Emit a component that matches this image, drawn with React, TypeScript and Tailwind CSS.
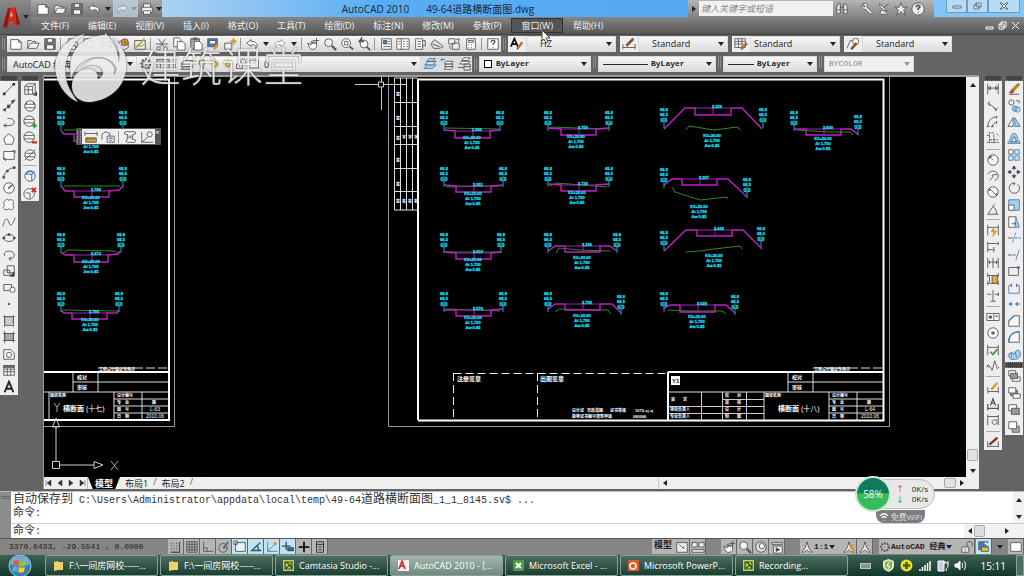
import type { ReactNode } from "react";

const blue = "#3f7fb5";
const pale = "#a9d0ee";
const gold = "#d79a2b";

// Toolbar glyphs, all drawn on a 16 x 16 grid
const glyphs: Record<string, ReactNode> = {
  new: <path d="M2 3h9l3 3v8H2zM11 3v3h3" fill="#fff" />,
  open: <path d="M2 13V4h4l1 1h4v2M2 13l3-6h10l-3 6z" fill="#f4f4f4" />,
  save: <><path d="M2 2h12v12H2z" fill="#777" /><path d="M5 2h6v4H5zM4 9h8v5H4z" fill="#fff" /></>,
  undo: <path d="M7 3L2 7l5 4V9c4-1 6 1 5 4 4-4 1-8-5-8z" fill="#fff" />,
  redo: <path d="M9 3l5 4-5 4V9c-4-1-6 1-5 4-4-4-1-8 5-8z" fill="#fff" stroke="#999" />,
  print: <><path d="M4 6V2h8v4M2 6h12v6H2z" fill="#eee" /><path d="M4 10h8v4H4z" fill="#fff" /></>,
  preview: <><path d="M2 2h9v3M2 2v11h5" /><circle cx="9" cy="8" r="3.500" fill="#fff" /><path d="M11.500 10.500L15 14" strokeWidth="2" /></>,
  publish: <><path d="M3 6l5-3 6 3v6l-5 3-6-3z" fill="#dfe8ef" /><circle cx="10" cy="6" r="4" fill={gold} /><path d="M10 4v3h2" /></>,
  dwf: <><path d="M2 4h12v10H2z" fill="#e9efe4" /><path d="M4 12l9-10" stroke={gold} strokeWidth="2" /><path d="M3 11l3-2 3 2 4-3" stroke="#6a8f4e" /></>,
  cut: <><path d="M4 2l6 9M12 2L6 11M1 8h14" /><circle cx="4" cy="13" r="2" /><circle cx="12" cy="13" r="2" /></>,
  copy: <><path d="M2 1h6l2 2v8H2z" fill="#fff" /><path d="M6 5h6l3 3v7H6z" fill="#fff" /></>,
  paste: <><path d="M2 2h10v12H2z" fill="#aaa" /><path d="M5 1h4v2H5z" /><path d="M6 5h6l3 3v7H6z" fill="#fff" /></>,
  match: <><path d="M2 2h11v9H2z" fill="#4f7fc0" /><path d="M4 4h7v4H4z" fill="#fff" /><path d="M9 14l5-6" stroke={gold} strokeWidth="3" /></>,
  block: <><path d="M2 7h8v7H2z" fill="#eee" /><path d="M12 1l1 3 3 1-3 1-1 3-1-3-3-1 3-1z" fill={gold} stroke={gold} /></>,
  pan: <><path d="M2 7l4 2V5l2 3V4l2 4 2-3v6c-1 4-7 4-8 1z" fill="#fff" /><path d="M12 1v6M9 4h6" /></>,
  zoom: <><circle cx="6.500" cy="6.500" r="4.500" fill="#e8f2f8" /><path d="M10 10l5 5" strokeWidth="2.500" /></>,
  zoomWin: <><circle cx="7" cy="7" r="5" fill="#fff" /><path d="M5 5h4v4H5z" /><path d="M11 11l4 3" strokeWidth="2" /></>,
  zoomPrev: <><circle cx="8" cy="8" r="4.500" fill="#fff" /><path d="M2 6l3-4v3h3M11 11l4 4" strokeWidth="2" /></>,
  props: <><path d="M3 2h11v12H3z" fill="#fff" /><path d="M5 4h4v4H5z" fill={blue} /><path d="M10 5h3M10 8h3M5 11h8" /></>,
  center: <><path d="M1 2h14v12H1z" fill="#fff" /><path d="M6 2v12M8 5h2M12 5h2M8 8h2M12 8h2M8 11h2M12 11h2M3 5h2M3 8h2" /></>,
  palette: <><path d="M3 2h8v12H3z" fill="#fff" /><path d="M11 4h3v6h-3M5 5h4M5 8h4M5 11h4" /></>,
  sheet: <path d="M1 8l4-5 6 4 4 4-4 2H4zM3 8l8 3" fill="#ddd" />,
  markup: <><path d="M2 2h7v6H2zM6 7h8v7H6z" fill="#eee" /><path d="M10 3l4-1-1 4M3 10l1 4" /></>,
  calc: <><path d="M3 2h10v12H3z" fill="#fff" /><path d="M5 4h6v2H5zM5 9h1M8 9h1M11 9h0M5 12h1M8 12h1" /></>,
  help: <><path d="M2 2h12v12H2z" fill="#fff" /><path d="M6 6c0-3 5-3 4 0-1 1-2 1-2 3M8 11v1" strokeWidth="1.500" /></>,
  textStyle: <><path d="M1 11L5 2l4 9M3 8h4" stroke="#111" strokeWidth="2" /><path d="M8 14l6-8" stroke="#a9702f" strokeWidth="2.500" /></>,
  dimStyle: <><path d="M1 8v6M15 8v6M1 12h14" /><path d="M5 10l8-8" stroke="#8b5327" strokeWidth="3" /></>,
  tableStyle: <><path d="M1 2h12v10H1zM1 5h12M5 2v10M9 2v10M1 8h12" fill="#fff" /><path d="M8 14l7-7" stroke="#a9702f" strokeWidth="3" /></>,
  leaderStyle: <><path d="M1 13l4-9h4" /><circle cx="11" cy="5" r="3.500" fill="#fff" /><path d="M6 14l6-7" stroke="#8b5327" strokeWidth="3" /></>,
  gear: <><circle cx="8" cy="8" r="5.500" strokeDasharray="2.500 1.500" strokeWidth="2" /><circle cx="8" cy="8" r="4" fill="#eee" /><circle cx="8" cy="8" r="1.500" /></>,
  workspace: <><path d="M1 3h14v10H1z" fill="#ddd" /><path d="M1 6h14M5 6v7" /></>,
  layers: <><path d="M1 11l4-4h10l-4 4zM1 8l4-4h10l-4 4z" fill="#fff" /><path d="M1 14l4-3h10l-4 3z" fill={pale} /></>,
  layersBlue: <><path d="M1 13l4-4h10l-4 4z" fill={pale} stroke={blue} /><path d="M2 9l4-4h9l-4 4zM4 5l3-3h7l-3 3z" fill="#cfe4f2" stroke="#35688f" /></>,
  layerPrev: <><path d="M5 14l2-3h8l-2 3zM5 11l2-3h8l-2 3zM5 8l2-3h8l-2 3z" fill="#fff" /><path d="M1 3h5M1 3l2-2M1 3l2 2" stroke={blue} /></>,
  layerState: <><path d="M3 8l3-3h9l-3 3zM5 4l3-3h7l-3 3z" fill="#fff" /><path d="M8 8h7v7H8zM1 12h7M8 11h7" /></>,
  bulb: <><circle cx="8" cy="6" r="4" fill="#f4d35c" /><path d="M6 11h4v3H6z" fill="#ddd" /></>,
  sun: <><circle cx="8" cy="8" r="3.500" fill="#f4c33c" /><path d="M8 1v2M8 13v2M1 8h2M13 8h2M3 3l1 1M12 12l1 1M13 3l-1 1M4 12l-1 1" stroke={gold} /></>,
  lock: <><path d="M2 8h8v6H2z" fill="#e6e6e6" /><path d="M8 8V4c0-3 6-3 6 0v3M6 10v2" /></>,
  line: <><path d="M3 13L13 3" /><path d="M1 12h3v3H1zM12 1h3v3h-3z" fill="#333" stroke="none" /></>,
  xline: <><path d="M2 14L14 2" /><path d="M6 7h3v3H6zM1 12l3-1v3zM12 5l3-4-4 1z" fill="#333" /></>,
  pline: <path d="M2 12h7c7 0 6-8 0-8H6M2 12l3-2M2 12l3 2" />,
  polygon: <path d="M8 2l6 5-2 7H4L2 7z" fill="#f7f7f7" />,
  rect: <path d="M2 4h12v9H2zM1 12h3v3M12 3h3v3" fill="#f7f7f7" />,
  arc: <><path d="M2 14C3 8 7 4 14 3" /><path d="M1 13h2v2H1zM5 6h2v2H5zM13 2h2v2h-2z" fill="#333" /></>,
  circle: <><circle cx="8" cy="8" r="6" fill="#f7f7f7" /><path d="M8 8l4-4M7 8h2" strokeWidth="1.500" /></>,
  cloud: <path d="M5 2c2-1 3 0 3 1 1-2 5-1 5 1s0 3-1 4c2 1 2 4 0 5s-3 0-4-1c-1 2-5 2-6 0s0-3 1-4C1 7 2 3 5 2z" fill="#f7f7f7" />,
  spline: <path d="M1 13C4 0 7 5 8 9s4 4 7-6" />,
  ellipse: <><ellipse cx="8" cy="8" rx="6" ry="4" /><path d="M1 7h2v2H1zM13 7h2v2h-2zM7 3h2v2H7z" fill="#333" /></>,
  ellArc: <path d="M3 9c-3-7 11-7 11-1 0 4-4 5-6 4M8 12l3-2M8 12l2 3" />,
  insert: <><path d="M6 2h8v8H6zM2 7h7v6H2z" fill="#eee" /><path d="M9 14l5-5v5z" fill="#333" /></>,
  makeBlock: <><path d="M2 4h9v7H2z" fill="#eee" /><circle cx="12" cy="10" r="3" fill="#fff" /></>,
  point: <circle cx="8" cy="8" r="1" fill="#333" />,
  hatch: <><path d="M3 3h10v10H3z" /><path d="M3 6l3-3M3 9l6-6M3 12l9-9M5 13l8-8M8 13l5-5M1 3h14M3 1v14M13 1v14" strokeWidth=".7" /></>,
  gradient: <><path d="M3 4h10v8H3z" fill="#aaa" /><path d="M1 4h14M3 1v14M13 2v12M1 12h14" /></>,
  region: <><path d="M2 3h8l4 4v7H2z" fill="#f7f7f7" /><circle cx="8" cy="9" r="3" /></>,
  table: <><path d="M2 3h12v11H2zM2 7h12M2 10h12M6 5v9M10 5v9" fill="#fff" /><path d="M2 3h12v2H2z" fill="#777" /></>,
  letterA: <path d="M3 14L8 2l5 12M5 10h6" stroke="#222" strokeWidth="2.200" />,
  cube: <><path d="M2 5l3-3h9v9l-3 3H2zM2 5h9v9M11 5l3-3M6 5v9M2 9h9" fill="#f7f7f7" /><path d="M12 15l4-4v4z" fill="#111" /></>,
  globe: <><circle cx="8" cy="8" r="6" fill="#f7f7f7" /><path d="M2 6h12M2 10h12M4 3v3M12 3v3" /></>,
  globeAdd: <><circle cx="7" cy="7" r="6" fill="#f7f7f7" /><path d="M1 5h12M1 9h12" /><path d="M13 9v6M10 12h6" stroke="#2d9a3e" strokeWidth="2" /></>,
  globeDel: <><circle cx="7" cy="7" r="6" fill="#f7f7f7" /><path d="M1 5h12M1 9h12" /><path d="M10 13h6" stroke="#c92b2b" strokeWidth="2.500" /></>,
  globeOff: <><circle cx="8" cy="8" r="6" fill="#f7f7f7" /><path d="M2 14L14 2M3 6h10M3 10h10" /></>,
  cubeBlue: <><circle cx="8" cy="8" r="6" fill="#f7f7f7" /><path d="M3 6h7v7M10 6l3-3M3 6l3-3h6" stroke={blue} strokeWidth="1.300" /></>,
  cubeDel: <><circle cx="7" cy="9" r="6" fill="#f7f7f7" /><path d="M3 8h5v6" /><path d="M10 2l5 5M15 2l-5 5" stroke="#d02222" strokeWidth="2" /></>,
  dimLinear: <path d="M2 2v12M14 2v12M2 7h12M2 7l3-2v4zM14 7l-3-2v4z" />,
  dimAlign: <path d="M4 3L2 6M13 10l-2 4M3 5l9 7M3 5l1 3M12 12l-3-1" />,
  dimArc: <path d="M2 14C2 7 6 2 13 2M7 14c0-3 3-6 6-6M1 13h3M12 1v3M6 13h3M12 7v3" />,
  dimOrd: <path d="M4 1v13M1 5h3M4 10h10M9 4v10M12 3l3 3M6 2h3M1 13h14" strokeDasharray="3 1" />,
  radius: <><circle cx="8" cy="8" r="6" fill="#f7f7f7" /><path d="M8 8L4 4M4 4v3M4 4h3" /></>,
  jogged: <path d="M2 6c3-6 12-4 12 2 0 3-2 4-4 5M4 13l4-4-1-2 6-1" />,
  diameter: <><circle cx="8" cy="8" r="6" fill="#f7f7f7" /><path d="M4 4l8 8M4 4v3M12 12V9" /></>,
  angular: <path d="M14 14H2L10 2M8 5c3 2 4 5 4 9" />,
  quick: <><path d="M2 2v12M14 2v12M2 5h12" /><path d="M9 5l-3 5h3l-1 5 4-6H9z" fill={gold} stroke={gold} /></>,
  baseline: <path d="M2 2v12M14 2v4M2 4h12M9 8v6M2 11h7" />,
  cont: <path d="M2 2v12M8 2v12M14 2v12M2 7h12M4 5v4M12 5v4" />,
  space: <><path d="M2 1v5M14 1v5M2 10v5M14 10v5M2 4h12M2 13h12" /><path d="M7 4h6v9H7z" fill="#e0b23a" /><path d="M4 5v7" /></>,
  brk: <path d="M8 1v13M1 6h5M10 6h5M5 14h6M14 4v4" />,
  tolerance: <><path d="M1 4h14v8H1zM9 4v8" fill="#fff" /><path d="M3 8h4M5 6v4M12 6v2M12 10v0" strokeWidth="2" /></>,
  centerMark: <><circle cx="8" cy="8" r="6" fill="#f7f7f7" /><path d="M8 6v4M6 8h4" strokeWidth="1.500" /></>,
  inspect: <><path d="M2 2v12M14 2v12M2 5h12" /><path d="M5 10l3 3 5-6" stroke="#4a9a2d" strokeWidth="2" /></>,
  jogLine: <path d="M1 8h3l3 5 3-11 3 9 2-2M1 8l2-2M1 8l2 2" />,
  dimEdit: <><path d="M2 7v7M14 7v7M2 12h12" /><path d="M6 10l7-8" stroke={gold} strokeWidth="2.500" /></>,
  dimText: <path d="M2 8v7M14 8v7M2 13h12M5 10l3-8 3 8M6 7h4" strokeWidth="1.400" />,
  dimUpdate: <><path d="M2 2v12M14 2v12M2 4h12" /><path d="M10 8c-4 0-4 5 0 5 3 0 3-3 2-4M10 8h3" /></>,
  dimBrush: <><path d="M2 7v7M14 7v7M2 13h12" /><path d="M4 11l9-8" stroke="#8b3527" strokeWidth="3" /></>,
  erase: <><path d="M2 14h12" /><path d="M4 12l3-3 7-7" stroke="#a98b2f" strokeWidth="3.500" /><path d="M3 12l3-3 2 2-3 2z" fill="#d9534f" stroke="#844" /></>,
  copyObj: <><circle cx="5" cy="4" r="3" /><circle cx="9" cy="11" r="3" fill={pale} stroke={blue} /><circle cx="12" cy="12" r="3" stroke={blue} /><path d="M10 2h4v3" /></>,
  mirror: <><path d="M7 3v10H1z" fill="#fff" /><path d="M9 3v10h6z" fill={pale} stroke={blue} /></>,
  offset: <><path d="M1 13c0-4 3-3 3-6 1-7 7-7 8 0 0 3 3 2 3 6z" fill={pale} stroke={blue} /><path d="M4 11c2-1 3-3 3-5 1-1 2-1 2 0 0 3 1 4 3 5z" fill="#fff" /></>,
  array: <><path d="M2 2h5v5H2z" fill="#fff" /><path d="M9 2h5v5H9zM2 9h5v5H2zM9 9h5v5H9z" fill="#cfe6f6" stroke={blue} /></>,
  move: <path d="M8 1v5M8 10v5M1 8h5M10 8h5M8 1L6 4h4zM8 15l-2-3h4zM1 8l3-2v4zM15 8l-3-2v4z" fill="#333" />,
  rotate: <path d="M9 3c-8-2-9 10-1 11 7 0 8-8 4-10M9 3L7 1M9 3L7 5" />,
  scale: <><path d="M2 2h12v12H2z" fill={pale} stroke={blue} /><path d="M2 8h6v6H2z" fill="#fff" /></>,
  stretch: <><path d="M2 2h8v12H2z" fill="#fff" /><path d="M10 2l4 12h-4" fill={pale} stroke={blue} /><path d="M5 10h5M8 8l2 2-2 2" /></>,
  trim: <><path d="M1 8h6" /><path d="M10 2L6 14M9 8h7" stroke={blue} strokeDasharray="3 1" /></>,
  extend: <><path d="M1 8h5M7 8h3" /><path d="M14 2l-4 12" stroke={blue} /></>,
  breakPt: <path d="M2 13V4h11v9H2M12 3h2v2h-2z" />,
  breakObj: <><path d="M5 5H2v9h12V5h-3" stroke={blue} /><path d="M5 3v4M11 3v4" /></>,
  join: <path d="M1 8h5M10 8h5M6 8L4 6v4zM10 8l2-2v4z" stroke={blue} fill={blue} />,
  chamfer: <><path d="M2 14V8l6-6h6v12z" fill="#f7f7f7" /><path d="M2 8l6-6" stroke={blue} strokeWidth="1.500" /></>,
  fillet: <><path d="M2 14C2 6 6 2 14 2v12z" fill="#f7f7f7" /><path d="M2 14C2 6 6 2 14 2" stroke={blue} strokeWidth="1.500" /></>,
  explode: <path d="M1 9l4-3 3 2 4-5 3 2v6l-4 3H4zM5 6v6M9 5l2 7" fill={pale} stroke={blue} />,
  front: <><path d="M2 2h8v6H2zM6 9h9v5H6z" fill="#fff" /><path d="M4 5h8v6H4z" fill="#999" /></>,
  back: <><path d="M4 5h8v6H4z" fill="#999" /><path d="M2 2h8v6H2zM7 9h8v5H7z" fill="#fff" /></>,
  above: <><path d="M2 2h9v7H2z" fill="#fff" /><path d="M5 6h9v7H5z" fill="#999" /></>,
  under: <><path d="M6 7h8v7H6z" fill="#aaa" /><path d="M2 2h9v8H2z" fill="#fff" /></>,
  snap: <path d="M2 4h1M5 4h1M8 4h1M2 7h1M5 7h1M8 7h1M2 10h1M5 10h1M8 10h1M12 2v12H2" strokeWidth="1.500" />,
  grid: <path d="M2 2h12v12H2zM5 2v12M8 2v12M11 2v12M2 5h12M2 8h12M2 11h12" />,
  ortho: <path d="M3 2v11h11M3 9h4v4" />,
  polar: <><circle cx="7" cy="9" r="5" /><path d="M7 9l6-7M7 9h4" strokeWidth="1.500" /></>,
  osnap: <path d="M3 3h11v10H3zM1 1h4v4H1z" fill="#e8f4fa" />,
  angle: <path d="M13 3L3 12h11M9 7c2 1 2 3 2 5" stroke="#26556e" strokeWidth="1.500" />,
  ducs: <><path d="M3 2v11h11M3 13L12 4" stroke={blue} /><path d="M10 3l3 2" stroke={gold} strokeWidth="3" /></>,
  dyn: <path d="M1 7h10M6 2v9M8 9h6v3H8z" stroke="#26556e" strokeWidth="1.500" fill={blue} />,
  lwt: <path d="M8 2v12M2 8h12" stroke="#111" strokeWidth="2" />,
  qp: <path d="M4 2h8v12H4zM4 5h8M6 8h4M6 11h4" stroke="#222" />,
  model: <path d="M2 3h12v11H2zM5 5l5 5M10 10V7" fill="#eee" />,
  layout: <path d="M1 3h6v5H1zM9 3h6v5H9zM1 11h14v3H1z" fill="#eee" />,
  wheel: <><circle cx="8" cy="8" r="6" fill="#ddd" /><circle cx="9" cy="7" r="3" fill="#fff" /></>,
  motion: <><path d="M2 3h12v2H2zM4 7h10v8H4z" fill="#eee" /><path d="M7 9v4l4-2z" fill="#222" /></>,
  annot: <path d="M8 2L6 9l-4 5c3 0 5-1 6-3 1 2 3 3 6 3l-4-5z" fill="#eee" />,
  annotAuto: <><path d="M8 2L6 9l-4 5c3 0 5-1 6-3 1 2 3 3 6 3l-4-5z" fill="#eee" /><path d="M12 5l-2 4h3l-1 5" stroke={gold} strokeWidth="2" /></>,
  screen: <path d="M2 3h12v10H2z" fill="#fff" />,
  perf: <><path d="M2 2h10v9H2z" fill={blue} /><path d="M5 8h8v5H5z" fill="#e8c13a" /><path d="M9 3l4 3" stroke="#fff" strokeWidth="2" /></>,
  dist: <><path d="M1 2v5M15 2v5M1 4h14" /><path d="M2 9h12v5H2z" fill={gold} /><path d="M4 9v2M7 9v2M10 9v2" /></>,
  area: <><path d="M1 11V5l4-3 5 2v3" /><path d="M7 7h8v7H7z" fill="#fff" /><path d="M9 9h4v1H9zM9 12h4" stroke={blue} /></>,
  list: <path d="M3 2h10c2 0 2 3 0 3h-2v6h3c1 2 0 3-1 3H5c-2 0-2-3 0-3V5H3c-2 0-2-3 0-3zM6 7h4M6 9h4" fill="#f7f7f7" />,
  locate: <><path d="M2 2v12h13M2 14l7-6" /><circle cx="11" cy="5" r="3" /></>,
  find: <path d="M2 13V6l2-4h2v11zM14 13V6l-2-4h-2v11zM6 6h4M2 9h4M10 9h4" fill="#eee" />,
  key: <path d="M3 2c4-2 6 1 5 4l6 6-2 2-6-6C3 9 0 6 2 4l2 2 2-1z" fill="#eee" />,
  dish: <path d="M3 2c0 5 4 8 9 8zM8 7l5-5M5 9l-2 5h9" fill="#eee" />,
  star: <path d="M8 1l2 5h5l-4 3 2 6-5-4-5 4 2-6-4-3h5z" fill="#eee" />,
  ask: <><circle cx="8" cy="8" r="7" fill="#eee" /><path d="M6 6c0-3 5-3 4 0-1 1-2 1-2 3M8 11v1" strokeWidth="2" /></>,
};

function Glyph({ name, className = "size-3.5" }: { name: string; className?: string }) {
  return (
    <svg viewBox="0 0 16 16" className={className} fill="none" stroke="#555" strokeWidth="1" aria-hidden="true">
      {glyphs[name]}
    </svg>
  );
}

function Tool({ name, className = "h-full w-[17px]" }: { name: string; className?: string }) {
  return (
    <button type="button" aria-label={name} className={`flex shrink-0 items-center justify-center ${className}`}>
      <Glyph name={name} />
    </button>
  );
}

function Arrow({ dir = "down", dim = false }: { dir?: "down" | "up" | "left" | "right"; dim?: boolean }) {
  const d = { down: "M1 2h6L4 6z", up: "M1 6h6L4 2z", left: "M6 1v6L2 4z", right: "M2 1v6l4-3z" }[dir];
  return (
    <svg viewBox="0 0 8 8" className="size-2 shrink-0" fill={dim ? "#999" : "#222"} aria-hidden="true">
      <path d={d} />
    </svg>
  );
}

function ToolRow({ names }: { names: string[] }) {
  return (
    <>
      {names.map((name, i) => {
        if (name === "|") return <span key={i} className="mx-[2px] h-3 w-px shrink-0 bg-[#9a9a9a]" />;
        if (name === "v") return <span key={i} className="flex w-[11px] shrink-0 justify-center"><Arrow /></span>;
        return <Tool key={i} name={name} />;
      })}
    </>
  );
}

function Combo({ label, value, className, lead, disabled = false }: {
  label: string; value: string; className: string; lead?: ReactNode; disabled?: boolean;
}) {
  return (
    <div className={`flex h-4 shrink-0 items-center border border-[#d9d9d9] pr-[2px] ${disabled ? "bg-[#f0f0f0] text-[#888]" : "bg-linear-to-b from-[#f7f7f7] to-[#dcdcdc] text-[#222]"} ${className}`}>
      {lead}
      <select aria-label={label} disabled={disabled} className="min-w-0 flex-1 appearance-none bg-transparent outline-none">
        <option>{value}</option>
      </select>
      <Arrow dim={disabled} />
    </div>
  );
}

const Grip = () => <span className="mx-[2px] h-3 w-[3px] shrink-0 border-x border-[#8d8d8d]" />;

function Rail({ names, className }: { names: string[]; className: string }) {
  return (
    <div>
      <div className="mx-px h-1.5 border-y border-dotted border-[#777] bg-[#444]" />
      <div className={`flex flex-col bg-[#eeeef0] ${className}`}>
        {names.map((name, i) =>
          name === "|" ? (
            <span key={i} className="mx-0.5 my-[2px] h-px shrink-0 bg-[#aaa]" />
          ) : (
            <Tool key={i} name={name} className="min-h-0 w-full flex-1" />
          )
        )}
      </div>
    </div>
  );
}

const menus = ["文件(F)", "编辑(E)", "视图(V)", "插入(I)", "格式(O)", "工具(T)", "绘图(D)", "标注(N)", "修改(M)", "参数(P)", "窗口(W)", "帮助(H)"];

const drawTools = ["line", "xline", "pline", "polygon", "rect", "arc", "circle", "cloud", "spline", "ellipse", "ellArc", "insert", "makeBlock", "point", "hatch", "gradient", "region", "table", "letterA"];
const viewTools = ["cube", "globe", "globeAdd", "globeDel", "globeOff", "|", "cubeBlue", "cubeDel"];
const dimTools = ["dimLinear", "dimAlign", "dimArc", "dimOrd", "|", "radius", "jogged", "diameter", "angular", "|", "quick", "baseline", "cont", "space", "brk", "|", "tolerance", "centerMark", "inspect", "jogLine", "|", "dimEdit", "dimText", "dimUpdate", "|", "dimBrush"];
const modifyTools = ["erase", "copyObj", "mirror", "offset", "array", "move", "rotate", "scale", "stretch", "trim", "extend", "breakPt", "breakObj", "join", "chamfer", "fillet", "explode"];
const orderTools = ["front", "back", "above", "under"];

// l / r: elevation label positions [x, top]; cap: centre and top of the caption
type Section = { l: [number, number]; r: [number, number]; road: string; ground: string; cap: [number, number]; value: string };

const sections: Section[] = [
  { l: [61, 110], r: [123, 110], road: "61,131 64,134 74,134 74,141 109,141 109,134 119,134 123,130", ground: "64,130 120,130", cap: [91, 138], value: "1.546" },
  { l: [61, 166], r: [123, 166], road: "61,186 65,191 74,191 74,197 109,197 109,191 119,190 123,186", ground: "64,186 120,186", cap: [91, 194], value: "1.784" },
  { l: [61, 232], r: [121, 232], road: "61,252 65,255 74,255 74,262 108,262 108,255 118,254 120,251", ground: "62,254 68,250 115,251 119,254", cap: [91, 258], value: "2.474" },
  { l: [61, 291], r: [119, 291], road: "61,310 64,313 72,313 72,319 107,319 107,313 117,313 119,310", ground: "63,310 118,311", cap: [90, 316], value: "2.784" },
  { l: [444, 110], r: [500, 110], road: "444,130 455,131 455,138 490,138 490,131 500,130", ground: "444,128 500,129", cap: [472, 134], value: "1.946" },
  { l: [444, 166], r: [503, 166], road: "444,185 456,186 456,192 491,192 491,186 503,185", ground: "446,187 500,186", cap: [473, 190], value: "2.951" },
  { l: [444, 232], r: [501, 232], road: "444,252 456,253 456,259 491,259 491,253 501,252", ground: "446,252 500,252", cap: [473, 256], value: "2.410" },
  { l: [444, 291], r: [503, 291], road: "444,310 456,310 456,316 491,316 491,310 503,309", ground: "446,309 500,311", cap: [473, 314], value: "2.576" },
  { l: [548, 110], r: [609, 110], road: "548,128 561,129 561,135 596,135 596,129 609,128", ground: "550,127 607,129", cap: [576, 133], value: "2.759" },
  { l: [548, 166], r: [609, 166], road: "548,184 561,185 561,191 596,191 596,185 609,184", ground: "550,186 556,183 607,187", cap: [577, 189], value: "2.720" },
  { l: [548, 232], r: [617, 232], road: "548,251 555,246 565,246 565,252 600,252 600,246 610,246 617,251", ground: "556,253 559,248 580,250 610,251", cap: [582, 254], value: "3.186" },
  { l: [548, 291], r: [621, 294], road: "548,309 555,304 565,304 565,310 600,310 600,304 612,304 621,313", ground: "555,312 559,309 608,310 611,314", cap: [582, 312], value: "3.708" },
  { l: [664, 107], r: [763, 107], road: "664,129 685,108 695,108 695,115 731,115 731,108 742,108 762,129", ground: "686,130 689,126 714,130 737,127 741,130", cap: [712, 132], value: "3.329" },
  { l: [664, 167], r: [747, 177], road: "664,185 672,179 682,179 682,185 717,185 717,179 728,179 747,197", ground: "672,187 675,192 700,200 727,197 728,199", cap: [699, 203], value: "3.287" },
  { l: [664, 230], r: [761, 226], road: "664,251 686,230 697,230 697,236 732,236 732,230 743,230 762,249", ground: "686,252 700,251 714,249 740,246 742,249", cap: [714, 252], value: "3.442" },
  { l: [664, 291], r: [735, 294], road: "664,308 670,305 680,305 680,312 715,312 715,305 726,305 735,313", ground: "668,310 690,311 722,311 726,314", cap: [697, 313], value: "3.028" },
  { l: [794, 110], r: [858, 114], road: "794,129 806,129 806,135 841,135 841,129 851,129 859,135", ground: "796,130 830,132 850,132 853,135", cap: [823, 135], value: "2.600" },
];

function Elevation({ at: [x, y] }: { at: [number, number] }) {
  return (
    <g fill="#18d6e6" stroke="#18d6e6" strokeWidth=".3" textAnchor="middle" fontSize="4" fontWeight="700">
      <path d={`M${x} ${y + 10}V${y + 21}`} stroke="#1aa6b8" strokeWidth="1" />
      <text x={x} y={y + 4}>68.8</text>
      <text x={x} y={y + 9}>68.5</text>
      <text x={x} y={y + 15} fontSize="5">0.0</text>
    </g>
  );
}

function CrossSection({ s }: { s: Section }) {
  const [cx, cy] = s.cap;
  // the pavement box starts where two points share an x
  const points = s.road.split(" ");
  const left = points.find((p, i) => i > 0 && points[i + 1]?.split(",")[0] === p.split(",")[0]) ?? points[1];
  const [lx, ly] = left.split(",").map(Number);
  return (
    <g>
      <polyline points={s.ground} stroke="#2f8a24" fill="none" />
      <polyline points={s.road} stroke="#c01fc4" strokeWidth="1.400" fill="none" />
      <path d={`M${lx} ${ly}h35`} stroke="#a020c0" />
      <path d={`M${lx + 18} ${ly - 3}v9`} stroke="#a020a8" />
      <Elevation at={s.l} />
      <Elevation at={s.r} />
      <g fill="#18d6e6" stroke="#18d6e6" strokeWidth=".3" textAnchor="middle" fontSize="4" fontWeight="700">
        <text x={lx + 22} y={ly}>{s.value}</text>
        <text x={cx} y={cy + 5}>K0+20.00</text>
        <text x={cx} y={cy + 10}>At 1.700</text>
        <text x={cx} y={cy + 15}>Aw 0.85</text>
      </g>
    </g>
  );
}

function TitleBlock({ x, no, title }: { x: number; no: string; title: string }) {
  return (
    <g>
      <g stroke="#ddd" fill="none">
        <path d={`M${x + 29} 372v20M${x + 54} 372v20M${x + 29} 382h96M${x - 91} 392h216`} />
        <path d={`M${x + 5} 392v28M${x + 70} 392v28M${x + 98} 392v28M${x + 70} 399h55M${x + 70} 406h55M${x + 70} 413h55`} />
        <path d={`M${x + 54} 368h71`} strokeDasharray="9 3" />
        <path d={`M${x - 91} 372h216`} stroke="#fff" strokeWidth="2" />
      </g>
      <g fill="#fff" fontSize="4" fontWeight="700">
        <text x={x + 55} y="371">工程设计图纸专用章</text>
        <text x={x + 33} y="379" fontSize="5">校对</text>
        <text x={x + 33} y="389" fontSize="5">审核</text>
        <text x={x + 6} y="397">图纸名称</text>
        <text x={x + 73} y="397">设计编号</text>
        <text x={x + 73} y="404">专　业</text>
        <text x={x + 108} y="404">路</text>
        <text x={x + 73} y="411">图　号</text>
        <text x={x + 73} y="418">日　期</text>
        <text x={x + 19} y="411" fontSize="7">横断面<tspan fontWeight="400"> {title}</tspan></text>
        <text x={x + 106} y="411" fontWeight="400" fontSize="5">{no}</text>
        <text x={x + 102} y="418" fontWeight="400" fontSize="5">2010.06</text>
      </g>
    </g>
  );
}

function Drawing() {
  return (
    <svg viewBox="44 77 922 400" preserveAspectRatio="xMinYMin meet" className="block w-full font-['Liberation_Sans','Noto_Sans_CJK_SC',sans-serif]" role="img" aria-label="道路横断面图">
      <g stroke="#9a9a9a" fill="none">
        <path d="M174.500 77V426.500H44M388.500 77V426.500H889.500V77" />
        <path d="M394.500 78h23M394.500 78v132h23M400.500 78v132M406.500 78v132M412.500 78v132M394 102.500h24M394 126.500h24M394 144.500h24M394 168.500h24M394 191.500h24" stroke="#ddd" />
        <path d="M44 79.500H169V420H44M418 420V79.500H883.500V420.500H418" stroke="#fff" strokeWidth="2" />
        <path d="M453.500 373.500H668M453.500 373v46M537.500 373v46" stroke="#eee" strokeDasharray="8 4" />
        <path d="M668 372V420" stroke="#fff" strokeWidth="2" />
        <path d="M701.500 392v28M722.500 392v28M746.500 392v28M722 399.500h42M668 406.500h96M668 413.500h96" stroke="#ccc" />
      </g>
      <TitleBlock x={44} no="L-63" title="(十七)" />
      <TitleBlock x={759} no="L-64" title="(十八)" />
      <g fill="#fff" fontSize="4" fontWeight="700">
        {[96, 120, 140, 162, 186, 203].map((y) => <text key={y} x="396" y={y}>签</text>)}
        {[402, 408, 414].map((x) => <text key={x} x={x} y="139">字</text>)}
        {[402, 408, 414].map((x) => <text key={x} x={x} y="203">名</text>)}
        <text x="457" y="381" fontSize="6">注册签章</text>
        <text x="540" y="381" fontSize="6">出图签章</text>
        <text x="572" y="412">设计证</text>
        <text x="587" y="412">市政道路</text>
        <text x="610" y="412">证书等级</text>
        <text x="635" y="412">1070-sj-sj</text>
        <text x="572" y="418">勘察证书编号建筑甲级</text>
        <text x="633" y="418">080066</text>
        <path d="M671 376h9v9h-9z" />
        <text x="672" y="383" fill="#111" fontSize="6">Y1</text>
        <text x="671" y="401">审　　定</text>
        <text x="670" y="411">项目负责人</text>
        <text x="670" y="418">专业负责人</text>
        <text x="725" y="397">校　　对</text>
        <text x="725" y="404">审　　核</text>
        <text x="725" y="411">设　　计</text>
        <text x="725" y="418">制　　图</text>
      </g>
      {sections.map((s, i) => <CrossSection key={i} s={s} />)}
      <g stroke="#ccc" fill="none">
        <path d="M355 84.500h23M384 84.500h23M381.500 77v5M381.500 87v23M378.500 82h5v5h-5z" />
        <path d="M52.500 461.500h7v7h-7zM60 465h34M94 461.500l9 3.500-9 3.500zM56 461V427M52.500 427l3.500-9 3.500 9z" />
        <path d="M111 461l7 9M118 461l-7 9M54 403l3 4 3-4M57 407v5" stroke="#aaa" />
      </g>
    </svg>
  );
}

function StatusTool({ name, on = false }: { name: string; on?: boolean }) {
  return <Tool name={name} className={`h-[15px] w-[16px] border-r border-[#666] ${on ? "bg-[#c3e2ee]" : "bg-[#b5b5b5]"}`} />;
}

const tasks = [
  { text: "F:\\一间房网校-----...", color: "#f2d16b", mark: "" },
  { text: "F:\\一间房网校-----...", color: "#f2d16b", mark: "" },
  { text: "Camtasia Studio -...", color: "#c3d25a", mark: "arrow" },
  { text: "AutoCAD 2010 - [...", color: "#f6eeee", mark: "A", active: true },
  { text: "Microsoft Excel - ...", color: "#4e9b45", mark: "X" },
  { text: "Microsoft PowerP...", color: "#dd5a2c", mark: "P" },
  { text: "Recording...", color: "#c3d25a", mark: "arrow" },
];

export default function App() {
  return (
    <div className="relative flex min-h-screen flex-col overflow-hidden bg-[#646464] font-['Open_Sans','Noto_Sans_CJK_SC',sans-serif] text-[9px] leading-none text-[#222]">
      {/* Title bar and menu bar */}
      <header className="flex">
        <div className="flex w-[31px] shrink-0 items-center bg-linear-to-b from-[#8a8a8a] to-[#5c5c5c]">
          <button type="button" aria-label="应用程序菜单" className="flex items-center">
            <svg viewBox="0 0 22 28" className="h-7 w-[22px]" aria-hidden="true">
              <path d="M3 24L8 5l7-1 5 17-6 2-1-5-4 1-1 5z" fill="#cf2a22" />
              <path d="M3 24L8 5l2 1-3 19zM15 4l5 17-3 1z" fill="#8d1712" />
              <path d="M10 14l1-6 2 5z" fill="#eeb5ad" />
            </svg>
            <Arrow />
          </button>
        </div>
        <div className="min-w-0 flex-1">
          <div className="flex h-[17px] items-center bg-linear-to-r from-[#b7d7f2] from-10% via-[#58adf3] via-35% to-[#4fa3ee]">
            <div className="flex h-full w-[131px] shrink-0 items-center bg-linear-to-b from-[#aaa] to-[#777] pl-[3px]">
              <ToolRow names={["new", "open", "save", "undo", "v"]} />
              <div className="flex h-full items-center bg-[#bcd2e2] opacity-80"><Tool name="redo" /><Arrow dim /></div>
              <Tool name="print" />
              <Arrow />
            </div>
            <h1 className="flex min-w-0 flex-1 justify-center gap-[17px] pr-[30px] pl-[56px] text-[10px] text-[#17283a]">
              <span>AutoCAD 2010</span>
              <span>49-64道路横断面图.dwg</span>
            </h1>
            <div className="flex h-full w-[246px] shrink-0 items-center bg-linear-to-b from-[#b5b5b5] to-[#858585]">
              <span className="flex w-[11px] justify-center"><Arrow dir="right" /></span>
              <input aria-label="搜索" placeholder="键入关键字或短语" className="h-[15px] w-[134px] bg-[#f1f1f1] px-[2px] italic placeholder:text-[#888]" />
              <Tool name="find" /><Arrow dim />
              <Tool name="key" /><Tool name="dish" /><Tool name="star" /><Tool name="ask" />
              <Arrow dim />
            </div>
            <div className="flex h-full w-[90px] shrink-0 items-start justify-end bg-[#83c6f5] text-[#34495e]">
              {["最小化", "还原", "关闭"].map((name, i) => (
                <button key={name} type="button" aria-label={name} className={`flex h-[13px] items-center justify-center border border-t-0 border-[#6f9cbd] bg-[#b5dcf4] ${i === 2 ? "mr-1 w-[32px]" : "w-[21px]"}`}>
                  <svg viewBox="0 0 10 8" className="h-2 w-[10px]" fill="#fff" stroke="#54697a" aria-hidden="true">
                    <path d={["M1 4h8v2H1z", "M3 1h5v4H3zM1 3h5v4H1z", "M1 1h2l2 2 2-2h2L6 4l3 3H7L5 5 3 7H1l3-3z"][i]} />
                  </svg>
                </button>
              ))}
            </div>
          </div>
          <nav className="flex h-[17px] items-center gap-px bg-linear-to-b from-[#858585] to-[#565656] pl-px text-[9px] text-[#f0f0f0]">
            {menus.map((m) => (
              <button key={m} type="button" className={`h-[15px] px-[9px] ${m === "窗口(W)" ? "border border-[#333] bg-[#555]" : ""}`}>{m}</button>
            ))}
            <span className="ml-auto flex gap-1 pr-1">
              {["M1 6h7v2H1z", "M3 1h5v5H3zM1 3h5v5H1z", "M1 1l7 7M8 1L1 8"].map((d) => (
                <svg key={d} viewBox="0 0 9 9" className="size-[9px]" fill="none" stroke="#fff" aria-hidden="true"><path d={d} /></svg>
              ))}
            </span>
          </nav>
        </div>
      </header>

      {/* Docked toolbars */}
      <div className="flex flex-col gap-[4px] border-t border-[#444] pb-[3px] text-[9px]">
        <div className="flex h-[17px] items-center">
          <Grip />
          <div className="flex h-4 shrink-0 items-center bg-linear-to-b from-[#f5f5f5] to-[#d8d8d8]">
            <ToolRow names={["new", "open", "save", "|", "print", "preview", "print", "publish", "dwf", "|", "cut", "copy", "paste", "match", "block", "|", "undo", "v", "redo", "v", "|", "pan", "zoom", "zoomWin", "zoomPrev", "|", "props", "center", "palette", "sheet", "markup", "calc", "|", "help"]} />
          </div>
          <Grip />
          {[
            { icon: "textStyle", label: "文字样式", value: "HZ", pad: "pl-[13px]" },
            { icon: "dimStyle", label: "标注样式", value: "Standard", pad: "pl-[13px]" },
            { icon: "tableStyle", label: "表格样式", value: "Standard", pad: "pl-[3px]" },
            { icon: "leaderStyle", label: "多重引线样式", value: "Standard", pad: "pl-[13px]" },
          ].map((c) => (
            <div key={c.icon} className="mr-[4px] flex shrink-0">
              <Tool name={c.icon} className="h-4 w-[18px] bg-[#eee]" />
              <Combo label={c.label} value={c.value} className={`w-[90px] ${c.pad}`} />
            </div>
          ))}
        </div>
        <div className="flex h-4 items-center">
          <Grip />
          <Combo label="工作空间" value="AutoCAD 经典" className="w-[130px] pl-[5px]" />
          <div className="flex h-4 shrink-0 items-center bg-linear-to-b from-[#f5f5f5] to-[#d8d8d8]">
            <ToolRow names={["gear", "workspace"]} />
            <Grip />
            <Tool name="layers" />
          </div>
          <Combo
            label="图层"
            value="0"
            className="w-[226px]"
            lead={<span className="flex items-center gap-px pr-1"><Glyph name="bulb" className="size-3" /><Glyph name="sun" className="size-3" /><Glyph name="sun" className="size-3" /><Glyph name="lock" className="size-3" /><Glyph name="screen" className="size-3" /></span>}
          />
          <div className="flex h-4 shrink-0 items-center bg-[#ddd]"><ToolRow names={["layersBlue", "layerPrev", "layerState"]} /></div>
          <Grip />
          <div className="flex font-['Liberation_Mono',monospace] text-[8px] font-bold">
            <Combo label="颜色" value="ByLayer" className="w-[112px] pl-[4px]" lead={<span className="mr-1 size-2 border border-black bg-white" />} />
            <Grip />
            <Combo label="线型" value="ByLayer" className="w-[118px] pl-[4px]" lead={<span className="mr-[3px] h-px w-[45px] bg-[#222]" />} />
            <Grip />
            <Combo label="线宽" value="ByLayer" className="w-[94px] pl-[4px]" lead={<span className="mr-[3px] h-px w-[26px] bg-[#222]" />} />
            <Grip />
            <Combo label="打印样式" value="BYCOLOR" className="w-[90px] pl-[4px] font-normal" disabled />
          </div>
        </div>
      </div>

      {/* Tool rails and model space */}
      <main className="flex flex-1 items-start">
        <div className="flex w-[43px] shrink-0 gap-[3px]">
          <div className="w-[18px]"><Rail names={drawTools} className="h-[314px]" /></div>
          <div className="w-[18px]"><Rail names={viewTools} className="h-[120px]" /></div>
        </div>
        <div className="flex min-w-0 flex-1 self-stretch border-t-2 border-l border-[#9a9c9a]">
          <div className="flex min-w-0 flex-1 flex-col bg-black">
            <Drawing />
            <div className="mt-auto flex h-3 items-stretch bg-[#efefef] text-[9px]">
              <span className="flex w-[44px] items-center justify-around border-r border-[#bbb]">
                {["M1 1v6M6 1v6L2 4z", "M6 1v6L2 4z", "M2 1v6l4-3z", "M7 1v6M2 1v6l4-3z"].map((d) => (
                  <svg key={d} viewBox="0 0 8 8" className="size-2" fill="#333" stroke="#333" strokeWidth=".5" aria-hidden="true"><path d={d} /></svg>
                ))}
              </span>
              <button type="button" className="w-8 bg-black font-bold text-white [clip-path:polygon(0_0,100%_0,85%_100%,15%_100%)]">模型</button>
              <button type="button" className="px-[5px]">布局1</button>
              <span className="text-[#555]">/</span>
              <button type="button" className="px-[5px]">布局2</button>
              <span className="text-[#555]">/</span>
              <span className="ml-auto flex w-[308px] items-center justify-between border-l border-[#ccc] pl-0.5">
                <Arrow dir="left" />
                <span className="flex items-center gap-[2px]"><span className="h-2.5 w-[12px] rounded-xs border border-[#aaa] bg-[#e2e2e2]" /><Arrow dir="right" /></span>
              </span>
            </div>
          </div>
          <div className="flex w-[13px] shrink-0 flex-col items-center bg-[#efefef] pt-1 pb-[14px]">
            <Arrow dir="up" />
            <span className="mt-auto mb-[6px] h-3 w-[11px] rounded-xs border border-[#aaa] bg-[#e2e2e2]" />
            <Arrow />
          </div>
        </div>
        <div className="flex w-[45px] shrink-0 justify-end gap-[3px] pr-px">
          <div className="w-[18px]"><Rail names={dimTools} className="h-[369px]" /></div>
          <div className="w-[18px]">
            <Rail names={modifyTools} className="h-[281px]" />
            <Rail names={orderTools} className="h-[67px]" />
          </div>
        </div>
      </main>

      {/* Command window */}
      <section className="mt-[2px] flex border-t border-[#bbb] bg-white font-['Liberation_Mono','Noto_Sans_CJK_SC',monospace] text-[10px] text-[#333]">
        <div className="w-[11px] shrink-0 bg-[#8c8c8c] pt-1"><span className="mx-px block h-[3px] border-y border-[#666]" /></div>
        <div className="min-w-0 flex-1">
          <div className="flex h-[31px]">
            <div className="min-w-0 flex-1 overflow-hidden pt-[2px] pl-[2px] leading-3 whitespace-nowrap">
              <p><span className="text-[12px] leading-3">自动保存到</span> C:\Users\Administrator\appdata\local\temp\49-64<span className="text-[12px] leading-3">道路横断面图</span>_1_1_8145.sv$ ...</p>
              <p><span className="text-[11px] leading-3">命令</span>:</p>
            </div>
            <div className="flex w-[11px] flex-col items-center justify-between bg-[#f1f1f1] pt-1 pb-0.5"><Arrow dir="up" /><Arrow /></div>
          </div>
          <div className="flex h-[15px] items-center border-t border-[#ccc]">
            <label htmlFor="cmd" className="pl-[2px]"><span className="text-[11px]">命令</span>:</label>
            <input id="cmd" className="h-3 min-w-0 flex-1 outline-none" />
            <span className="flex h-full w-[60px] items-center bg-[#f1f1f1] pl-0.5"><Arrow dir="left" /><span className="mr-[18px] h-3 w-[11px] rounded-xs border border-[#aaa] bg-[#ddd]" /><Arrow dir="right" /></span>
          </div>
        </div>
      </section>

      {/* Status bar */}
      <section className="flex h-4 items-center border-t border-[#555] bg-[#858585] font-['Liberation_Mono','Noto_Sans_CJK_SC',monospace] text-[8px]">
        <span className="w-[168px] shrink-0 pl-[9px] whitespace-pre">3370.8433, -29.5541 , 0.0000</span>
        <div className="flex">
          {["snap", "grid", "ortho", "polar"].map((n) => <StatusTool key={n} name={n} />)}
          {["osnap", "angle", "ducs", "dyn"].map((n) => <StatusTool key={n} name={n} on />)}
          {["lwt", "qp"].map((n) => <StatusTool key={n} name={n} />)}
        </div>
        <div className="ml-auto flex items-center">
          <button type="button" className="h-[15px] w-[22px] bg-[#b5b5b5] text-[9px] font-bold">模型</button>
          <StatusTool name="model" /><StatusTool name="layout" />
          <span className="w-[15px]" />
          {["pan", "zoom", "wheel", "motion"].map((n) => <StatusTool key={n} name={n} />)}
          <span className="w-[15px]" />
          <button type="button" className="flex h-[15px] w-[41px] items-center bg-[#b5b5b5] font-bold"><Glyph name="annot" />1:1<Arrow /></button>
          <StatusTool name="annotAuto" /><StatusTool name="annot" />
          <span className="w-[6px]" />
          <button type="button" className="flex h-[15px] w-[80px] items-center bg-[#b5b5b5] font-bold whitespace-nowrap"><Glyph name="gear" className="size-3" />AutoCAD 经典<Arrow /></button>
          <StatusTool name="lock" /><span className="w-px" /><StatusTool name="perf" on />
          <span className="flex w-4 justify-center"><Arrow /></span>
          <StatusTool name="screen" />
        </div>
      </section>

      {/* Windows taskbar */}
      <footer className="flex h-[22px] items-center border-t border-[#6d8a7d] bg-linear-to-b from-[#3c6152] to-[#12352a] text-[10px] text-white">
        <button type="button" aria-label="开始" className="w-[45px] shrink-0 pl-[7px]">
          <svg viewBox="0 0 26 22" className="h-[22px] w-[26px]" aria-hidden="true">
            <circle cx="13" cy="11" r="11" fill="#3a7dae" stroke="#9fc6dd" />
            <path d="M3 9a10 8 0 0 1 20 0c-6 3-14 3-20 0z" fill="#9cc8e4" opacity=".6" />
            <path d="M7 6c2-1 3-1 5 0l-1 5c-2-1-3-1-5 0z" fill="#e65a2c" />
            <path d="M13 6c2 1 4 1 6 0l-1 5c-2 1-4 1-6 0z" fill="#8cc63f" />
            <path d="M6 12c2-1 3-1 5 0l-1 5c-2-1-3-1-5 0z" fill="#4fb0ea" />
            <path d="M12 12c2 1 4 1 6 0l-1 5c-2 1-4 1-6 0z" fill="#fbc82e" />
          </svg>
        </button>
        <div className="flex min-w-0 gap-[2px]">
          {tasks.map((t, i) => (
            <button
              key={i}
              type="button"
              className={`flex h-[21px] w-[113px] items-center gap-[5px] overflow-hidden rounded-xs border border-[#86a195] px-[7px] whitespace-nowrap ${t.active ? "bg-linear-to-b from-[#a5b7ae] to-[#70887d]" : "bg-linear-to-b from-[#4e6e61] to-[#1b3e32]"}`}
            >
              <svg viewBox="0 0 11 11" className="size-[11px] shrink-0" aria-hidden="true">
                <path d={t.mark === "" ? "M1 2l4-1v9l-4 1zM5 2h5v8H5z" : "M0 0h11v11H0z"} fill={t.color} />
                {t.mark === "arrow" && <path d="M2 2h7v7H2zM3 8l4-3-4-3M7 5l2 4" stroke="#2b4a22" strokeWidth="1.200" fill="none" />}
                {t.mark === "A" && <path d="M1 9l3-8 3 8M2 6h4" stroke="#cc1f1f" strokeWidth="1.500" fill="none" />}
                {t.mark === "X" && <path d="M3 3l5 5M8 3L3 8" stroke="#fff" strokeWidth="2" />}
                {t.mark === "P" && <circle cx="5" cy="6" r="3" stroke="#fff" strokeWidth="1.500" fill="none" />}
              </svg>
              <span className="text-[9px]">{t.text}</span>
            </button>
          ))}
        </div>
        <div className="ml-auto flex shrink-0 items-center gap-[5px]">
          <svg viewBox="0 0 13 13" className="mr-[5px] size-[13px]" aria-hidden="true"><path d="M1 4h11v6H1z" fill="#b9c4be" /><path d="M2 6h9M2 8h9" stroke="#566" /></svg>
          <svg viewBox="0 0 13 13" className="size-[13px]" aria-hidden="true"><path d="M6.500 0L12 2v5c0 3-3 5-5.500 6C4 12 1 10 1 7V2z" fill="#dceccb" /><path d="M6.500 2L10 3v4c0 2-2 3-3.500 4C5 10 3 9 3 7V3z" fill="#8aad3a" /><path d="M7 3L5 7h3l-2 3" stroke="#fff" fill="none" /></svg>
          <svg viewBox="0 0 13 13" className="size-[13px]" aria-hidden="true"><circle cx="6.500" cy="6.500" r="6" fill="#f4d728" /><path d="M6.500 3v7M3 6.500h7" stroke="#276b2b" strokeWidth="2.500" /></svg>
          <svg viewBox="0 0 13 13" className="size-[13px]" aria-hidden="true"><path d="M2 12v-2M4.500 12V8M7 12V6M9.500 12V4M12 12V2" stroke="#fff" strokeWidth="1.500" /></svg>
          <svg viewBox="0 0 13 13" className="size-[13px]" fill="none" stroke="#fff" aria-hidden="true"><path d="M2 2h6v10H2z" fill="#ccd" /><path d="M8 4h4v3c0 2-2 2-2 5M9 2v2M12 2v2" /></svg>
          <svg viewBox="0 0 13 13" className="size-[13px]" fill="none" stroke="#fff" aria-hidden="true"><path d="M1 5h2l3-3v9L3 8H1z" fill="#fff" /><path d="M8 4c1 1 1 4 0 5M10 2c2 2 2 7 0 9" /></svg>
          <time className="mr-[5px] ml-[9px]">15:11</time>
          <span className="h-[21px] w-[8px] border border-[#86a195] bg-[#4e6e61]" />
        </div>
      </footer>

      {/* Floating inquiry toolbar */}
      <div className="absolute top-[128px] left-[76px] flex h-[17px] w-[85px] items-center bg-[#555]">
        <span className="mx-px h-3 w-1 border-x border-dotted border-[#aaa]" />
        <div className="flex h-[15px] items-center bg-[#eee]"><ToolRow names={["dist", "area", "|", "list", "locate"]} /></div>
        <button type="button" aria-label="关闭工具栏" className="self-start text-[8px] text-white">×</button>
      </div>

      {/* Watermark */}
      <div className="pointer-events-none absolute top-[33px] left-[55px] flex items-start gap-[13px]">
        <svg viewBox="0 0 72 70" className="h-[70px] w-[72px] drop-shadow-[0_0_1px_#555]" fill="#ececec" opacity=".9" aria-hidden="true">
          <path d="M30 1C8 6-3 24 1 41c3 14 12 24 22 28C13 56 8 44 11 29 14 16 21 7 30 1z" />
          <path d="M50 2C32 3 19 12 16 28c-1 7-1 12 0 18 4-14 14-22 27-22 12 0 20 8 20 18 3-12 0-30-13-42z" />
          <path d="M54 2c16 10 21 27 15 43-5 14-18 22-33 24-12 1-20-7-19-18 1-10 9-16 18-15 6 1 9 6 7 10 6-1 8-7 4-11-5-5-14-4-20 1 7-12 22-14 30-6 3 3 4 8 3 12 8-14 8-29-5-40z" />
        </svg>
        <span className="pt-[13px] text-[41px] leading-none font-light whitespace-nowrap text-[#eee] opacity-90 [text-shadow:0_0_2px_#555]">建筑课堂</span>
      </div>

      {/* Network speed gadget */}
      <div className="absolute right-[89px] bottom-[64px] flex w-[80px] flex-col items-center">
        <div className="flex h-[36px] w-full items-center">
          <div className="z-10 flex size-[36px] shrink-0 items-center justify-center rounded-full border-2 border-[#cfe6d8] bg-linear-to-b from-[#0f7a5c] from-45% to-[#35bd59] to-50% text-[10px] text-white">58%</div>
          <div className="-ml-3 flex h-[30px] flex-1 flex-col justify-center gap-[2px] rounded-r-full border border-[#bbb] bg-[#e8e8e8] pr-[6px] pl-[16px] text-[8px]">
            <p className="flex justify-between"><span className="text-[#d43c2c]">↑</span>0K/s</p>
            <p className="flex justify-between"><span className="text-[#2a8a4a]">↓</span>0K/s</p>
          </div>
        </div>
      </div>
      <div className="absolute right-[99px] bottom-[53px] flex h-[13px] w-[49px] items-center justify-center gap-[2px] rounded-b-lg bg-[#7d7d7d] text-[8px] text-[#ddd]">
        <svg viewBox="0 0 10 8" className="h-2 w-[10px]" fill="none" stroke="#fff" aria-hidden="true"><path d="M1 3c2-3 6-3 8 0M3 5c1-2 3-2 4 0M5 7v0.500" strokeWidth="1.300" /></svg>
        免费WiFi
      </div>

      {/* Mouse pointer */}
      <svg viewBox="0 0 10 15" className="pointer-events-none absolute top-[29px] left-[541px] h-[15px] w-[10px]" aria-hidden="true">
        <path d="M1 1v11l2-2 2 4 2-1-2-4h4z" fill="#fff" stroke="#444" />
      </svg>
    </div>
  );
}
